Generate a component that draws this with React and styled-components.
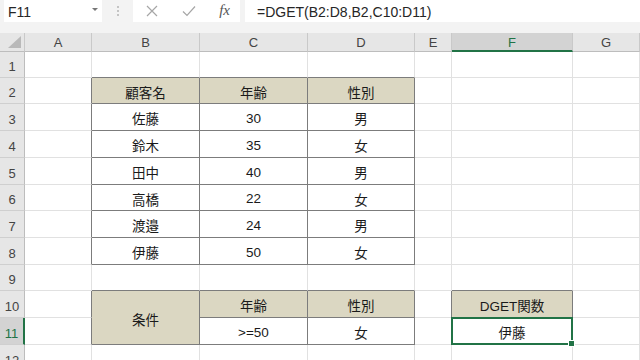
import React from "react";
import styled, { createGlobalStyle } from "styled-components";

const GlobalStyle = createGlobalStyle`
  body {
    margin: 0;
    background: #ffffff;
    font-family: "Liberation Sans", "Noto Sans CJK JP", sans-serif;
  }
`;

const COLS = ["A", "B", "C", "D", "E", "F", "G"];
const ROW_HEIGHTS = [26, 26, 27, 27, 27, 26, 27, 27, 26, 27, 27, 27];

const DATA = {
  "2,2": { text: "顧客名", fill: true },
  "2,3": { text: "年齢", fill: true },
  "2,4": { text: "性別", fill: true },
  "3,2": { text: "佐藤" }, "3,3": { text: "30" }, "3,4": { text: "男" },
  "4,2": { text: "鈴木" }, "4,3": { text: "35" }, "4,4": { text: "女" },
  "5,2": { text: "田中" }, "5,3": { text: "40" }, "5,4": { text: "男" },
  "6,2": { text: "高橋" }, "6,3": { text: "22" }, "6,4": { text: "女" },
  "7,2": { text: "渡邉" }, "7,3": { text: "24" }, "7,4": { text: "男" },
  "8,2": { text: "伊藤" }, "8,3": { text: "50" }, "8,4": { text: "女" },
  "10,2": { text: "条件", fill: true, span: 2 },
  "10,3": { text: "年齢", fill: true },
  "10,4": { text: "性別", fill: true },
  "10,6": { text: "DGET関数", fill: true },
  "11,3": { text: ">=50" },
  "11,4": { text: "女" },
  "11,6": { text: "伊藤", selected: true },
};

// cells that carry the dark table border
const boxed = (r, c) =>
  (r >= 2 && r <= 8 && c >= 2 && c <= 4) ||
  (r >= 10 && r <= 11 && c >= 2 && c <= 4) ||
  (r >= 10 && r <= 11 && c === 6);

const App = () => {
  const cells = [];
  for (let r = 1; r <= ROW_HEIGHTS.length; r++) {
    cells.push(
      <RowHead key={`h${r}`} $selected={r === 11}>
        {r}
      </RowHead>
    );
    for (let c = 1; c <= COLS.length; c++) {
      if (r === 11 && c === 2) continue;
      const d = DATA[`${r},${c}`] || {};
      const bottomRow = d.span ? r + d.span - 1 : r;
      cells.push(
        <Cell
          key={`${r}-${c}`}
          $fill={d.fill}
          $span={d.span}
          $right={boxed(r, c) || boxed(r, c + 1)}
          $bottom={boxed(bottomRow, c) || boxed(bottomRow + 1, c)}
          $selected={d.selected}
        >
          {d.text}
        </Cell>
      );
    }
  }

  return (
    <Window>
      <GlobalStyle />
      <FormulaBar>
        <NameBox>
          F11
          <DropArrow />
        </NameBox>
        <Grip>
          <span />
          <span />
          <span />
        </Grip>
        <IconBox>
          <svg width="14" height="14" viewBox="0 0 14 14">
            <path d="M2 2 L12 12 M12 2 L2 12" stroke="#a6a6a6" strokeWidth="1.2" fill="none" />
          </svg>
          <svg width="16" height="14" viewBox="0 0 16 14">
            <path d="M2 7.5 L6 11.5 L14 2.5" stroke="#a6a6a6" strokeWidth="1.2" fill="none" />
          </svg>
          <Fx>fx</Fx>
        </IconBox>
        <FormulaInput>=DGET(B2:D8,B2,C10:D11)</FormulaInput>
      </FormulaBar>
      <Sheet>
        <Corner>
          <svg width="14" height="13" viewBox="0 0 14 13">
            <polygon points="13,0 13,12 0,12" fill="#b9b9b9" />
          </svg>
        </Corner>
        {COLS.map((col) => (
          <ColHead key={col} $selected={col === "F"}>
            {col}
          </ColHead>
        ))}
        {cells}
      </Sheet>
    </Window>
  );
};

const Window = styled.div`
  width: 640px;
  height: 360px;
  overflow: hidden;
  display: flex;
  flex-direction: column;
  background: #ffffff;
`;

const FormulaBar = styled.div`
  height: 33px;
  flex-shrink: 0;
  display: flex;
  align-items: flex-start;
  background: #f3f3f3;
  box-sizing: border-box;
`;

const NameBox = styled.div`
  width: 98px;
  height: 22px;
  margin-left: 4px;
  background: #ffffff;
  display: flex;
  align-items: center;
  justify-content: space-between;
  padding: 1px 4px 0 4px;
  box-sizing: border-box;
  font-size: 14px;
  color: #262626;
`;

const DropArrow = styled.span`
  width: 0;
  height: 0;
  border-left: 3px solid transparent;
  border-right: 3px solid transparent;
  border-top: 3px solid #767676;
  margin-bottom: 5px;
`;

const Grip = styled.div`
  width: 31px;
  height: 22px;
  display: flex;
  flex-direction: column;
  align-items: center;
  justify-content: center;
  gap: 2px;

  span {
    width: 2px;
    height: 2px;
    background: #c4c4c4;
  }
`;

const IconBox = styled.div`
  width: 107px;
  height: 22px;
  background: #ffffff;
  display: flex;
  align-items: center;
  justify-content: space-between;
  padding: 0 10px 0 12px;
  box-sizing: border-box;
`;

const Fx = styled.span`
  font-family: "Liberation Serif", serif;
  font-style: italic;
  font-size: 15px;
  color: #555555;
  margin-bottom: 2px;
`;

const FormulaInput = styled.div`
  flex: 1;
  height: 22px;
  margin-left: 5px;
  background: #ffffff;
  display: flex;
  align-items: center;
  padding: 1px 0 0 12px;
  box-sizing: border-box;
  font-size: 14px;
  color: #262626;
`;

const Sheet = styled.div`
  display: grid;
  grid-template-columns: 25px 67px 108px 108px 107px 37px 121px 67px;
  grid-template-rows: 19px ${ROW_HEIGHTS.map((h) => `${h}px`).join(" ")};
  font-size: 13.5px;
  color: #1a1a1a;
`;

const Corner = styled.div`
  background: #e6e6e6;
  border-right: 1px solid #c9c9c9;
  border-bottom: 1px solid #bdbdbd;
  display: flex;
  align-items: flex-end;
  justify-content: flex-end;
  padding: 0 2px 2px 0;
  box-sizing: border-box;
`;

const ColHead = styled.div`
  background: ${(p) => (p.$selected ? "#d3d3d3" : "#e6e6e6")};
  color: ${(p) => (p.$selected ? "#217346" : "#444444")};
  border-right: 1px solid #c9c9c9;
  border-bottom: ${(p) => (p.$selected ? "2px solid #217346" : "1px solid #bdbdbd")};
  box-sizing: border-box;
  display: flex;
  align-items: center;
  justify-content: center;
  font-size: 13px;
  padding-top: 1px;
`;

const RowHead = styled.div`
  background: ${(p) => (p.$selected ? "#d3d3d3" : "#e6e6e6")};
  color: ${(p) => (p.$selected ? "#217346" : "#444444")};
  border-bottom: 1px solid #cfcfcf;
  border-right: ${(p) => (p.$selected ? "2px solid #217346" : "1px solid #bdbdbd")};
  box-sizing: border-box;
  display: flex;
  align-items: center;
  justify-content: center;
  font-size: 13px;
  padding-top: 4px;
`;

const Cell = styled.div`
  position: relative;
  grid-row: span ${(p) => p.$span || 1};
  background: ${(p) => (p.$fill ? "#dbd7c2" : "#ffffff")};
  border-right: 1px solid ${(p) => (p.$right ? "#7c7c7c" : "#e1e1e1")};
  border-bottom: 1px solid ${(p) => (p.$bottom ? "#7c7c7c" : "#e1e1e1")};
  box-sizing: border-box;
  display: flex;
  align-items: center;
  justify-content: center;
  padding-top: 2px;

  ${(p) =>
    p.$selected &&
    `
    &::after {
      content: "";
      position: absolute;
      top: -1px;
      left: -1px;
      right: -1px;
      bottom: -1px;
      border: 2px solid #217346;
    }
    &::before {
      content: "";
      position: absolute;
      right: -3px;
      bottom: -3px;
      width: 5px;
      height: 5px;
      background: #217346;
      border: 1px solid #ffffff;
      z-index: 1;
    }
  `}
`;

export default App;
